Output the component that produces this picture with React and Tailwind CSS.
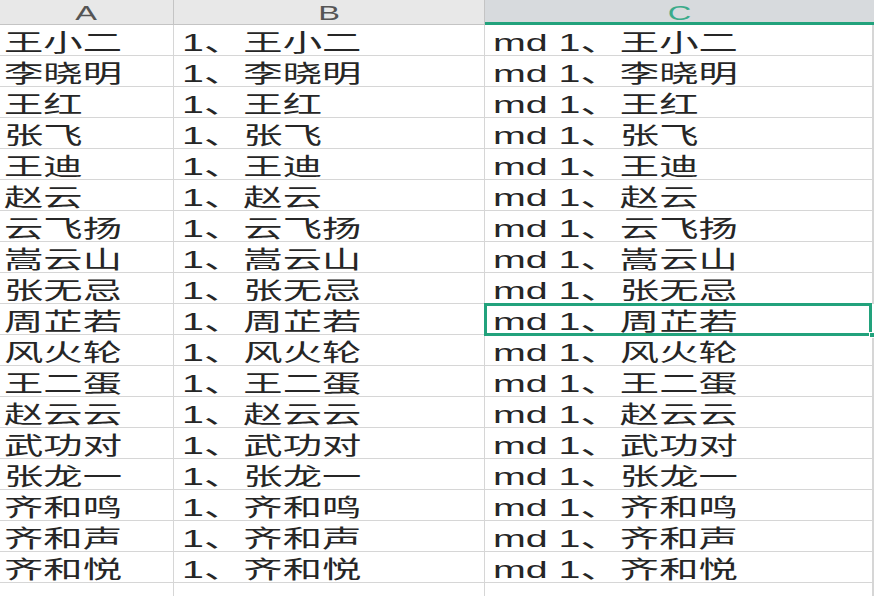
import React from "react";

const names = [
  "王小二", "李晓明", "王红", "张飞", "王迪", "赵云", "云飞扬", "嵩云山", "张无忌",
  "周芷若", "风火轮", "王二蛋", "赵云云", "武功对", "张龙一", "齐和鸣", "齐和声", "齐和悦",
];

const font = { fontFamily: '"Liberation Sans", "Noto Sans CJK SC", sans-serif' };

function Txt({ children }) {
  return (
    <span className="inline-block origin-left scale-x-[1.64] whitespace-nowrap text-[24px] leading-none text-[#262626]">
      {children}
    </span>
  );
}

export default function App() {
  return (
    <div className="w-[874px] h-[596px] overflow-hidden bg-white" style={font}>
      <div className="grid grid-cols-[174px_311px_1fr]">
        <div className="h-[25px] flex items-center justify-center bg-[#e8e8e8] border-r border-b border-[#c4c4c4]">
          <span className="inline-block scale-x-[1.55] text-[21px] leading-none text-[#555]">A</span>
        </div>
        <div className="h-[25px] flex items-center justify-center bg-[#e8e8e8] border-r border-b border-[#c4c4c4]">
          <span className="inline-block scale-x-[1.55] text-[21px] leading-none text-[#555]">B</span>
        </div>
        <div className="h-[25px] flex items-center justify-center bg-[#d7dadd] border-b-[3px] border-[#22a27c] pt-[2px]">
          <span className="inline-block scale-x-[1.55] text-[21px] leading-none text-[#3bab8a]">C</span>
        </div>

        {names.map((n, i) => (
          <React.Fragment key={i}>
            <div className="h-[31px] flex items-center pl-[4px] pt-[5px] border-r border-b border-[#d6d6d6]">
              <Txt>{n}</Txt>
            </div>
            <div className="h-[31px] flex items-center pl-[8px] pt-[5px] border-r border-b border-[#d6d6d6]">
              <Txt>1、{n}</Txt>
            </div>
            <div
              className={
                i === 9
                  ? "relative h-[31px] flex items-center pl-[8px] pt-[5px] border-b border-[#d6d6d6] outline-[3px] outline-solid outline-[#22a27c] -outline-offset-2 mr-[3px]"
                  : "h-[31px] flex items-center pl-[8px] pt-[5px] border-b border-r-2 border-[#d6d6d6]"
              }
            >
              <Txt>md 1、{n}</Txt>
              {i === 9 && (
                <span className="absolute -right-[4px] -bottom-[4px] w-[6px] h-[6px] bg-[#22a27c] border border-white" />
              )}
            </div>
          </React.Fragment>
        ))}

        <div className="h-[31px] border-r border-b border-[#d6d6d6]" />
        <div className="h-[31px] border-r border-b border-[#d6d6d6]" />
        <div className="h-[31px] border-b border-r-2 border-[#d6d6d6]" />
      </div>
    </div>
  );
}
